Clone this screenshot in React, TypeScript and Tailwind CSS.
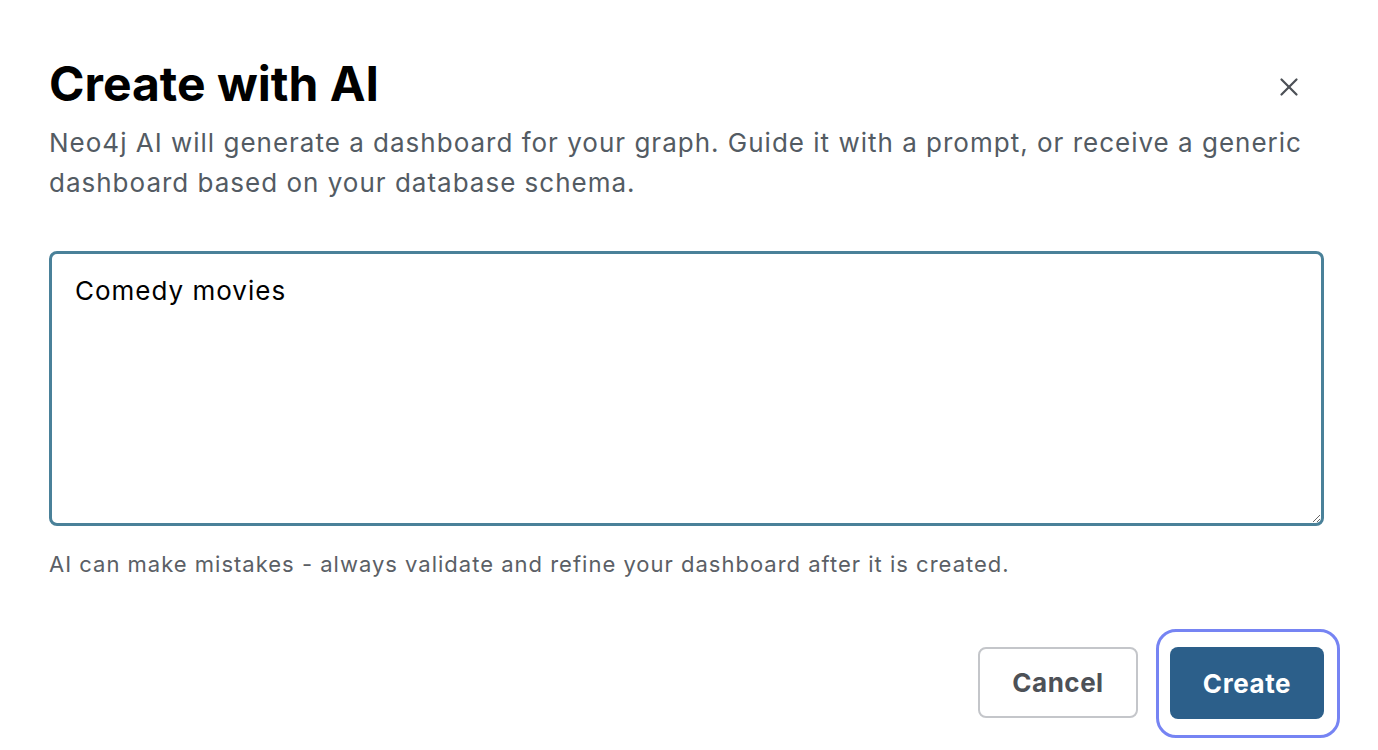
import { X } from 'lucide-react'

export default function App() {
  return (
    <div
      className="w-[1378px] h-[750px] bg-white overflow-hidden"
      style={{ fontFamily: 'Inter, "Noto Sans", sans-serif' }}
    >
      <div className="pl-[49px] pr-[54px] pt-[56px] flex flex-col">
        {/* Header */}
        <div className="flex items-start justify-between">
          <h1 className="text-[48px] leading-[56px] font-bold text-black tracking-[0px]">
            Create with AI
          </h1>
          <button className="mt-[16px] mr-[20px] text-[#4d5157]">
            <X size={30} strokeWidth={1.8} />
          </button>
        </div>
        <p className="mt-[11px] text-[26px] leading-[40px] tracking-[1px] text-[#535b63] pr-[10px]">
          Neo4j AI will generate a dashboard for your graph. Guide it with a prompt, or receive a generic
          dashboard based on your database schema.
        </p>

        {/* Prompt */}
        <textarea
          defaultValue="Comedy movies"
          className="mt-[48px] w-[1275px] h-[275px] border-[3px] border-[#4a8199] rounded-[8px] px-[23px] py-[19px] text-[26px] leading-[36px] tracking-[1px] text-black outline-none resize-y"
          style={{ fontFamily: 'Inter, "Noto Sans", sans-serif' }}
        />
        <p className="mt-[23px] text-[22px] leading-[30px] tracking-[1px] text-[#5b5f66]">
          AI can make mistakes - always validate and refine your dashboard after it is created.
        </p>

        {/* Actions */}
        <div className="mt-[68px] flex justify-end gap-[32px]">
          <button className="w-[160px] h-[71px] border-2 border-[#c4c6ca] rounded-[8px] text-[26px] tracking-[0.5px] font-bold text-[#4d5157]">
            Cancel
          </button>
          <button className="relative w-[154px] h-[72px] bg-[#2c5f8a] rounded-[8px] text-[26px] tracking-[0.6px] font-bold text-white">
            Create
            <span className="absolute -left-[14px] -right-[16px] -top-[18px] -bottom-[19px] border-[3px] border-[#7684f3] rounded-[20px] pointer-events-none" />
          </button>
        </div>
      </div>
    </div>
  )
}
